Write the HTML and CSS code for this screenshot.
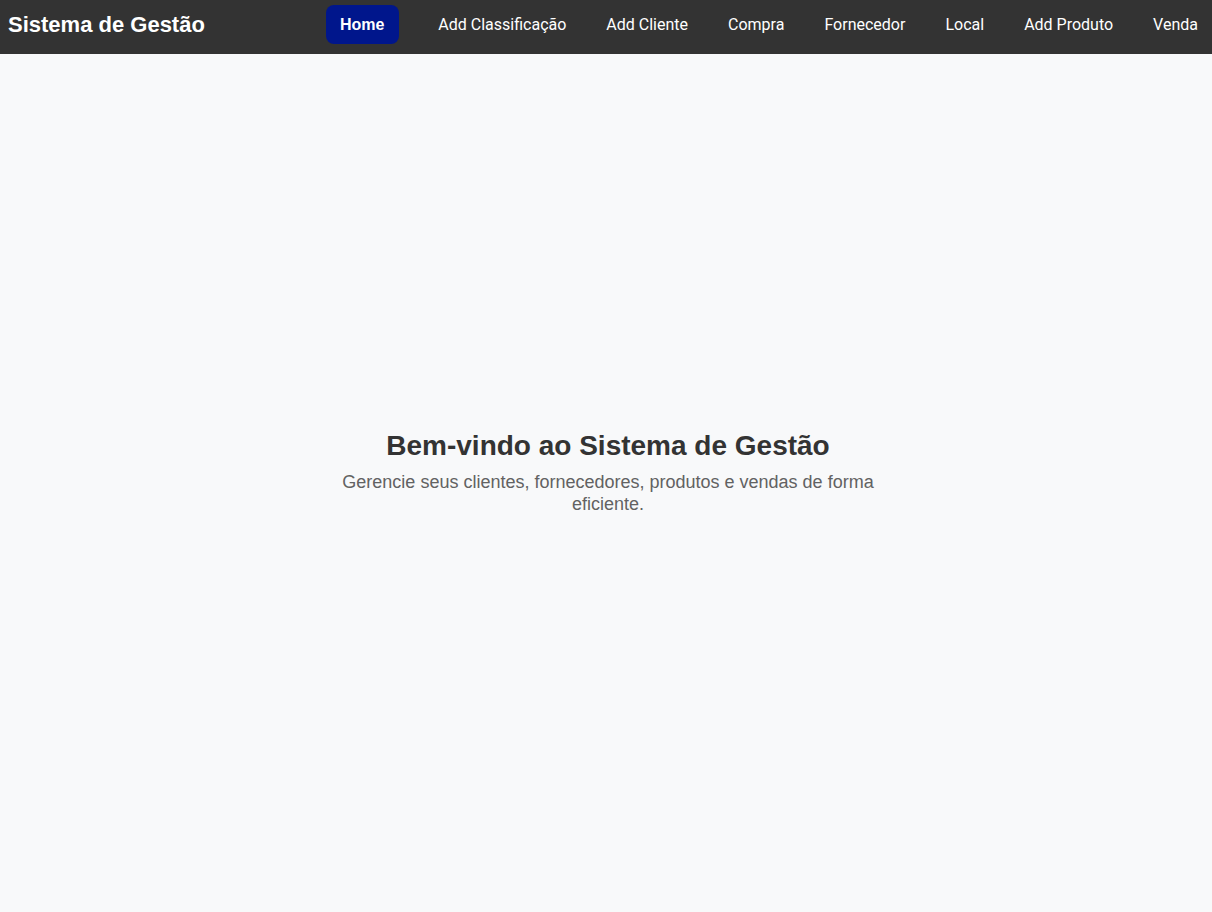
FILE: index.html
```html
<!DOCTYPE html>
<html lang="pt-BR">
<head>
<meta charset="utf-8">
<title>Sistema de Gestão</title>
<link rel="stylesheet" href="styles.css">
</head>
<body>
<header class="topbar">
  <div class="brand">Sistema de Gestão</div>
  <nav class="nav">
    <a class="nav-link active" href="#">Home</a>
    <a class="nav-link" href="#">Add Classificação</a>
    <a class="nav-link" href="#">Add Cliente</a>
    <a class="nav-link" href="#">Compra</a>
    <a class="nav-link" href="#">Fornecedor</a>
    <a class="nav-link" href="#">Local</a>
    <a class="nav-link" href="#">Add Produto</a>
    <a class="nav-link" href="#">Venda</a>
  </nav>
</header>
<main class="main">
  <section class="welcome">
    <h1 class="welcome-title">Bem-vindo ao Sistema de Gestão</h1>
    <p class="welcome-text">Gerencie seus clientes, fornecedores, produtos e vendas de forma eficiente.</p>
  </section>
</main>
</body>
</html>
```

FILE: styles.css
```css
html, body {
  margin: 0;
  padding: 0;
  height: 100%;
}
body {
  background: #f8f9fa;
  font-family: "Liberation Sans", Arial, sans-serif;
  display: flex;
  flex-direction: column;
  overflow: hidden;
}
.topbar {
  height: 54px;
  box-sizing: border-box;
  background: #333333;
  display: flex;
  align-items: center;
  justify-content: space-between;
  padding: 0 0 5px 8px;
  flex-shrink: 0;
}
.brand {
  color: #ffffff;
  font-weight: bold;
  font-size: 22px;
}
.nav {
  display: flex;
  align-items: center;
  gap: 10px;
  margin-right: -1px;
}
.nav-link {
  font-family: Roboto, "Liberation Sans", sans-serif;
  color: #ffffff;
  text-decoration: none;
  font-size: 16px;
  padding: 10px 15px;
  border-radius: 8px;
  line-height: 19px;
}
.nav-link.active {
  background: #00168c;
  font-family: "Liberation Sans", Arial, sans-serif;
  font-weight: bold;
  margin-right: 14px;
  padding: 10px 15px 10px 14px;
}
.main {
  flex: 1;
  display: flex;
  align-items: center;
  justify-content: center;
  padding-bottom: 22px;
}
.welcome {
  text-align: center;
  max-width: 540px;
  margin-left: 4px;
}
.welcome-title {
  margin: 0 0 8px;
  font-size: 28px;
  color: #333333;
}
.welcome-text {
  margin: 0;
  font-size: 18px;
  color: #626262;
  line-height: 22px;
  padding-top: 1px;
}
```
